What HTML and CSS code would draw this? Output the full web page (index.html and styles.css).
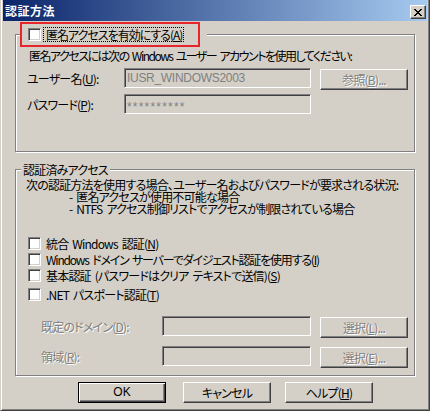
FILE: index.html
```html
<!DOCTYPE html>
<html lang="ja">
<head>
    <meta charset="UTF-8">
    <title>認証方法</title>
    <link rel="stylesheet" href="styles.css">
</head>
<body>
    <div class="window">
        <div class="titlebar">
            <span class="title">認証方法</span>
            <button class="close" type="button">
                <svg width="8" height="7" viewBox="0 0 8 7" shape-rendering="crispEdges">
                    <path d="M0 0h2v1H0z M6 0h2v1H6z M1 1h2v1H1z M5 1h2v1H5z M2 2h4v1H2z M3 3h2v1H3z M2 4h4v1H2z M1 5h2v1H1z M5 5h2v1H5z M0 6h2v1H0z M6 6h2v1H6z" fill="#000"/>
                </svg>
            </button>
        </div>

        <div class="content">
            <div class="group group-anon">
                <div class="legend legend-check">
                    <span class="check"></span>
                    <span class="focus">匿名アクセスを有効にする(<u>A</u>)</span>
                </div>
                <p class="desc">匿名アクセスには次の Windows ユーザー アカウントを使用してください:</p>
                <div class="form form-account">
                    <label>ユーザー名(<u>U</u>):</label>
                    <div class="field">IUSR_WINDOWS2003</div>
                    <button class="btn btn-small" type="button" disabled>参照(<u>B</u>)...</button>
                    <label>パスワード(<u>P</u>):</label>
                    <div class="field field-pass">**********</div>
                </div>
            </div>

            <div class="group group-auth">
                <div class="legend legend-text">認証済みアクセス</div>
                <div class="lines">
                    <p>次の認証方法を使用する場合、ユーザー名およびパスワードが要求される状況:</p>
                    <p class="indent">- 匿名アクセスが使用不可能な場合</p>
                    <p class="indent">- NTFS アクセス制御リストでアクセスが制限されている場合</p>
                </div>
                <ul class="checks">
                    <li><span class="check"></span>統合 Windows 認証(<u>N</u>)</li>
                    <li class="tight"><span class="check"></span>Windows ドメイン サーバーでダイジェスト認証を使用する(<u>I</u>)</li>
                    <li><span class="check"></span>基本認証 (パスワードはクリア テキストで送信)(<u>S</u>)</li>
                    <li class="last"><span class="check"></span>.NET パスポート認証(<u>T</u>)</li>
                </ul>
                <div class="form form-domain">
                    <label class="disabled">既定のドメイン(<u>D</u>):</label>
                    <div class="field"></div>
                    <button class="btn btn-small" type="button" disabled>選択(<u>L</u>)...</button>
                    <label class="disabled">領域(<u>R</u>):</label>
                    <div class="field"></div>
                    <button class="btn btn-small" type="button" disabled>選択(<u>E</u>)...</button>
                </div>
            </div>

            <div class="actions">
                <button class="btn btn-default" type="button">OK</button>
                <button class="btn btn-cancel" type="button">キャンセル</button>
                <button class="btn btn-help" type="button">ヘルプ(<u>H</u>)</button>
            </div>
        </div>

        <div class="highlight"></div>
    </div>
</body>
</html>
```

FILE: styles.css
```css
body {
    margin: 0;
    padding: 0;
    background-color: #d4d0c8;
    font-family: "Noto Sans CJK JP", sans-serif;
    font-size: 12px;
    font-feature-settings: "palt";
    letter-spacing: -0.8px;
    word-spacing: 2px;
    color: #000;
}
p {
    margin: 0;
}
u {
    text-decoration: underline;
    text-underline-offset: 1px;
}
.window {
    position: relative;
    width: 430px;
    height: 411px;
    box-sizing: border-box;
    border: 1px solid;
    border-top: 0;
    border-color: #d4d0c8 #404040 #404040 #d4d0c8;
    box-shadow: inset 1px 0 0 #fff, inset -1px -1px 0 #808080;
    padding: 0 2px 2px 2px;
    background-color: #d4d0c8;
}
.titlebar {
    height: 21px;
    display: flex;
    justify-content: space-between;
    background: linear-gradient(to right, #0a246a, #a6caf0);
    padding: 0 1px 0 2px;
}
.title {
    color: #fff;
    font-weight: bold;
    font-size: 12px;
    letter-spacing: 0.5px;
    line-height: 21px;
}
.close {
    width: 16px;
    height: 14px;
    margin-top: 5px;
    padding: 0;
    box-sizing: border-box;
    background-color: #d4d0c8;
    border: 1px solid;
    border-color: #fff #404040 #404040 #fff;
    box-shadow: inset -1px -1px 0 #808080;
    display: flex;
    align-items: center;
    justify-content: center;
}
.close svg {
    display: block;
}
.content {
    padding-top: 13px;
}

/* etched group boxes */
.group {
    position: relative;
    width: 400px;
    margin-left: 12px;
    box-sizing: border-box;
    border: 1px solid #808080;
    box-shadow: 1px 1px 0 #fff, inset 1px 1px 0 #fff;
}
.group-anon {
    height: 118px;
    padding: 14px 0 0 11px;
}
.group-auth {
    height: 207px;
    margin-top: 17px;
    padding: 9px 0 0 10px;
}
.legend {
    position: absolute;
    background-color: #d4d0c8;
}
.legend-check {
    top: -8px;
    left: 4px;
    width: 187px;
    height: 15px;
    box-sizing: border-box;
    padding-left: 8px;
    display: flex;
    align-items: center;
}
.legend-check .check {
    margin-right: 3px;
}
.focus {
    outline: 1px dotted #000;
    padding: 0 1px 0 2px;
    line-height: 13px;
    letter-spacing: -1px;
}
.legend-text {
    top: -7px;
    left: 5px;
    padding: 0 2px;
    line-height: 13px;
}
.desc {
    margin-left: 2px;
    line-height: 13px;
    letter-spacing: -1.5px;
    white-space: nowrap;
}

/* sunken checkbox */
.check {
    display: inline-block;
    width: 13px;
    height: 13px;
    box-sizing: border-box;
    background-color: #fff;
    border: 1px solid;
    border-color: #808080 #fff #fff #808080;
    box-shadow: inset 1px 1px 0 #404040, inset -1px -1px 0 #d4d0c8;
    flex: none;
}

.form {
    display: grid;
    grid-template-rows: 20px 20px;
    column-gap: 9px;
}
.form label {
    align-self: center;
    line-height: 13px;
}
.form-account {
    grid-template-columns: 88px 187px 88px;
    row-gap: 6px;
    margin-top: 6px;
}
.form-domain {
    grid-template-columns: 112px 149px 88px;
    row-gap: 10px;
    margin: 14px 0 0 15px;
}
.field {
    height: 20px;
    box-sizing: border-box;
    border: 1px solid;
    border-color: #808080 #fff #fff #808080;
    box-shadow: inset 1px 1px 0 #404040, inset -1px -1px 0 #d4d0c8;
    padding: 0 2px;
    color: #808080;
    font-family: "Liberation Sans", "Noto Sans CJK JP", sans-serif;
    font-size: 12px;
    letter-spacing: -0.3px;
    line-height: 18px;
    white-space: nowrap;
    overflow: hidden;
}
.field-pass {
    line-height: 24px;
    letter-spacing: 1.2px;
}
.disabled {
    color: #808080;
    text-shadow: 1px 1px 0 #fff;
}

.lines p {
    line-height: 12px;
    white-space: nowrap;
}
.lines .indent {
    padding-left: 43px;
}
.checks {
    list-style: none;
    margin: 20px 0 0 0;
    padding: 0;
}
.checks li {
    display: flex;
    align-items: center;
    height: 16px;
    padding-left: 2px;
    white-space: pre;
}
.checks li .check {
    margin-right: 5px;
}
.checks .tight {
    letter-spacing: -1.2px;
}
.checks .last {
    margin-top: 3px;
}

/* raised push buttons */
.btn {
    height: 21px;
    width: 88px;
    padding: 0;
    box-sizing: border-box;
    background-color: #d4d0c8;
    border: 1px solid;
    border-color: #fff #404040 #404040 #fff;
    box-shadow: inset -1px -1px 0 #808080;
    font-family: "Noto Sans CJK JP", sans-serif;
    font-size: 12px;
    font-feature-settings: "palt";
    letter-spacing: -0.8px;
    color: #000;
    line-height: 17px;
}
.btn:disabled {
    color: #808080;
    text-shadow: 1px 1px 0 #fff;
}
.btn-small {
    margin-top: 1px;
}
.btn-default {
    border-color: #000;
    box-shadow: inset 1px 1px 0 #fff, inset -1px -1px 0 #404040, inset -2px -2px 0 #808080;
    font-family: "Liberation Sans", sans-serif;
    letter-spacing: 0;
}
.actions {
    display: flex;
    margin-top: 6px;
    padding-left: 75px;
}
.btn-cancel {
    margin-left: 17px;
}
.btn-help {
    margin-left: 14px;
}

/* annotation box round the anonymous option */
.highlight {
    position: absolute;
    left: 19px;
    top: 22px;
    width: 180px;
    height: 25px;
    box-sizing: border-box;
    border: 2px solid #e8242c;
}
```
